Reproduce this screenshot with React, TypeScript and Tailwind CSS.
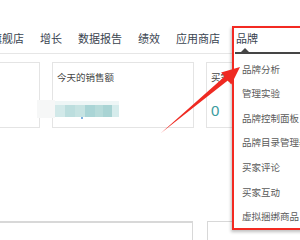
import React from "react";

const cjk = { fontFamily: '"Noto Sans CJK SC", "Noto Sans", sans-serif' };

const navItems = ["旗舰店", "增长", "数据报告", "绩效", "应用商店", "品牌"];
const menuItems = [
  "品牌分析",
  "管理实验",
  "品牌控制面板",
  "品牌目录管理器",
  "买家评论",
  "买家互动",
  "虚拟捆绑商品",
];

const mosaic = [
  { w: 10, c: "#d2e9e9" },
  { w: 10, c: "#bcdede" },
  { w: 10, c: "#c6e3e2" },
  { w: 10, c: "#aad5d6" },
  { w: 8, c: "#b6dbda" },
  { w: 9, c: "#a9d4d4" },
  { w: 7, c: "#d6ecec" },
];

export default function App() {
  return (
    <div className="relative w-[300px] h-[240px] overflow-hidden bg-white" style={cjk}>
      {/* nav */}
      <div className="flex gap-[16px] ml-[-9px] pt-[31px] pb-[7px] text-[11px] leading-[15px] text-[#3a4450] border-b border-[#e6e6e6] whitespace-nowrap">
        {navItems.map((n) => (
          <span key={n}>{n}</span>
        ))}
      </div>

      {/* top cards row */}
      <div className="flex gap-[12px] mt-[8px]">
        <div className="w-[40px] h-[66px] shrink-0 border border-l-0 border-[#e4e4e4]" />
        <div className="w-[142px] h-[66px] shrink-0 border border-[#e4e4e4] pl-[4px] pt-[8px]">
          <div className="text-[9.5px] leading-[12px] text-[#444]">今天的销售额</div>
        </div>
        <div className="w-[120px] h-[66px] shrink-0 border border-[#e4e4e4] pl-[4px] pt-[8px]">
          <div className="text-[9.5px] leading-[12px] text-[#444]">买家消息</div>
          <div className="mt-[19px] text-[15px] leading-[18px] text-[#3a9c9e]" style={{ fontFamily: '"Liberation Sans", Arial, sans-serif' }}>0</div>
        </div>
      </div>

      {/* bottom cards row */}
      <div className="flex gap-[14px] mt-[93px]">
        <div className="w-[193px] h-[40px] shrink-0 border border-l-0 border-t-2 border-[#d8d8d8]" />
        <div className="w-[120px] h-[40px] shrink-0 border border-[#d8d8d8]" />
      </div>

      {/* mosaic (blurred values) */}
      <div className="absolute left-[37px] top-[100px] w-[18px] h-[18px] bg-[#f6f7f7]" />
      <div className="absolute left-[55px] top-[101px] w-[64px] h-[4px] bg-[#eef6f6]" />
      <div className="absolute left-[55px] top-[105px] flex h-[12px]">
        {mosaic.map((m, i) => (
          <div key={i} className="h-full" style={{ width: m.w, background: m.c }} />
        ))}
      </div>
      <div className="absolute left-[81px] top-[117px] w-[2px] h-[2px] bg-[#7fb0e0]" />

      {/* dropdown menu */}
      <div className="absolute left-[233px] top-[52px] w-[80px] h-[177px] bg-white">
        <div className="ml-[2px] h-[2px] bg-[#454545]" />
        <div className="flex flex-col pl-[9px] pt-[8.5px] text-[9.5px] leading-[12px] text-[#5a5a5a] whitespace-nowrap">
          {menuItems.map((m) => (
            <div key={m} className="h-[24.67px]">
              {m}
            </div>
          ))}
        </div>
      </div>
      {/* caret */}
      <div className="absolute left-[241px] top-[48px] w-0 h-0 border-l-[4px] border-r-[4px] border-b-[4px] border-l-transparent border-r-transparent border-b-[#454545]" />

      {/* red annotation box */}
      <div className="absolute left-[232px] top-[26px] w-[90px] h-[204px] border-2 border-[#f32a22] shadow-[-1px_2px_3px_rgba(0,0,0,0.25)]" />

      {/* red arrow */}
      <svg className="absolute left-0 top-0" width="300" height="240" viewBox="0 0 300 240">
        <polygon
          points="161,133 224.6,76.6 221.1,72.4 240,67 231.3,84.6 227.8,80.4"
          fill="#ef2a22"
        />
      </svg>
    </div>
  );
}
